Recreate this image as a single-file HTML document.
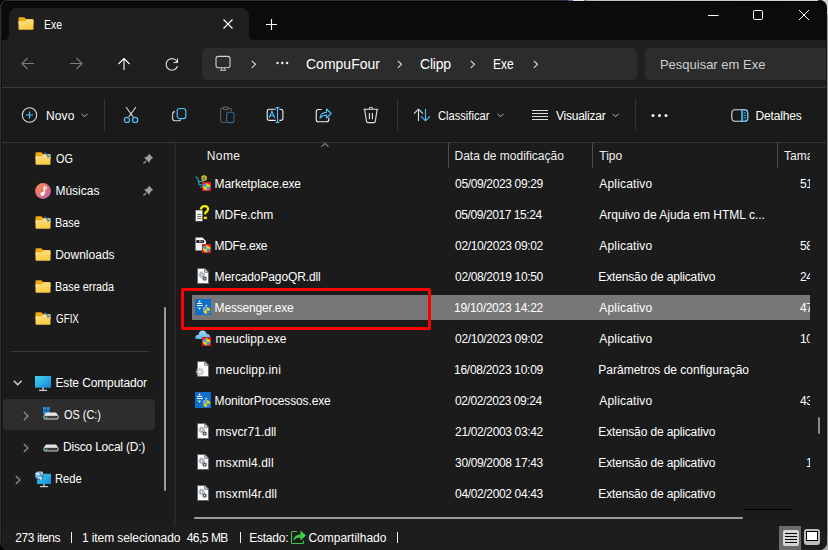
<!DOCTYPE html>
<html><head><meta charset="utf-8"><title>Exe</title><style>
*{margin:0;padding:0;box-sizing:border-box}
html,body{width:828px;height:550px;overflow:hidden;background:#000;font-family:"Liberation Sans", sans-serif}
#bgR{position:absolute;left:820px;top:0;width:8px;height:550px;background:#9a9ca4}
#bgTR{position:absolute;left:560px;top:0;width:268px;height:14px;background:#d4d4d4}
#bgBR{position:absolute;left:800px;top:535px;width:28px;height:15px;background:#a4a4a4}
#win{position:absolute;left:0;top:0;width:827px;height:550px;border-radius:8px;overflow:hidden;background:#0b0b0b;box-shadow:inset 0 1px 0 #333,inset 1px 0 0 #303030,inset 0 -1px 0 #2a2a2a}
#win::after{content:"";position:absolute;left:1px;top:1px;right:0;bottom:1px;border-radius:7px;border-top:1px solid #000;border-left:1px solid #111;pointer-events:none}
#toprow{position:absolute;left:568px;top:0;width:250px;height:1px;background:linear-gradient(90deg,#4a70b0 0,#4a70b0 5px,#e8e8e8 5px,#e8e8e8 16px,#7088b0 16px,#7088b0 19px,#c0c0c0 19px,#d4d4d4 100%);z-index:5}
#rdark{position:absolute;left:826px;top:12px;width:1px;height:526px;background:#131313;z-index:5}
.t{position:absolute;white-space:nowrap;line-height:normal}
.ic{position:absolute;overflow:visible}
#tab{position:absolute;left:9px;top:8px;width:240px;height:32px;background:#1f1f1f;border-radius:8px 8px 0 0}
#navrow{position:absolute;left:1px;top:40px;width:826px;height:47px;background:#1f1f1f;border-top:1px solid #1a1a1a}
#tabear{position:absolute;left:249px;top:36px;width:4px;height:4px;background:radial-gradient(circle at 100% 0,#0b0b0b 3.5px,#1f1f1f 4px)}
#tabear2{position:absolute;left:5px;top:36px;width:4px;height:4px;background:radial-gradient(circle at 0 0,#0b0b0b 3.5px,#1f1f1f 4px)}
#addr{position:absolute;left:202px;top:48px;width:435px;height:32px;background:#2c2c2c;border-radius:5px}
#search{position:absolute;left:645px;top:48px;width:190px;height:32px;background:#2c2c2c;border-radius:5px}
#cmd{position:absolute;left:1px;top:87px;width:826px;height:55px;background:#1a1a1a;border-top:1px solid #393939}
.vsep{position:absolute;top:99px;width:1px;height:32px;background:#333}
#hsep{position:absolute;left:1px;top:142px;width:826px;height:384px;background:#1b1b1b;border-top:1px solid #363636}
#paneDiv{position:absolute;left:174px;top:143px;width:2px;height:383px;background:#272727}
#navsep{position:absolute;left:11px;top:351px;width:138px;height:1px;background:#3a3a3a}
#oshl{position:absolute;left:3px;top:399px;width:152px;height:31px;background:#2d2d2d;border-radius:4px}
#navthumb{position:absolute;left:164px;top:307px;width:2px;height:184px;background:#9a9a9a;border-radius:1px}
.hdiv{position:absolute;top:143px;width:1px;height:25px;background:#4c4c4c}
#tamaclip{position:absolute;left:777px;top:0;width:33px;height:200px;overflow:hidden}
#sizeclip{position:absolute;left:800px;top:0;width:10px;height:526px;overflow:hidden}
#selrow{position:absolute;left:192px;top:295px;width:618px;height:25px;background:#777}
#redbox{position:absolute;left:181px;top:288px;width:250px;height:42px;border:3px solid #ff0000;border-radius:2px}
#hscroll{position:absolute;left:194px;top:517px;width:549px;height:2px;background:#9a9a9a;border-radius:1px}
#hblack{position:absolute;left:743px;top:509px;width:50px;height:1px;background:#000}
#vthumb{position:absolute;left:818px;top:417px;width:2px;height:17px;background:#8a8a8a;border-radius:1px}
#status{position:absolute;left:1px;top:526px;width:826px;height:24px;background:#1d1d1d}
.sbar{position:absolute;top:532px;width:1px;height:11px;background:#f0f0f0}
#vb1{position:absolute;left:779px;top:526px;width:22px;height:24px;background:#6b6b6b}
#vb1i{position:absolute;left:4px;top:4px;width:16px;height:16px;background:#d6d6d6;border-radius:2px;background-image:linear-gradient(#000,#000),linear-gradient(#000,#000),linear-gradient(#000,#000),linear-gradient(#000,#000);background-size:12px 1px;background-repeat:no-repeat;background-position:2px 3px,2px 6px,2px 9px,2px 12px}
#vb2{position:absolute;left:804px;top:529px;width:16px;height:16px;background:#bdbdbd;border-radius:3px}
#vb2i{position:absolute;left:2px;top:2px;width:12px;height:10px;background:#fff;border:1px solid #000}
</style></head>
<body><svg width="0" height="0" style="position:absolute"><defs>
<linearGradient id="fg" x1="0" y1="0" x2="0.35" y2="1"><stop offset="0" stop-color="#ffe69a"/><stop offset="1" stop-color="#fdc93f"/></linearGradient>
<linearGradient id="cg" x1="0" y1="0" x2="0" y2="1"><stop offset="0" stop-color="#a7dcf7"/><stop offset="1" stop-color="#5ab6ea"/></linearGradient>
<linearGradient id="mg" x1="0" y1="0" x2="1" y2="1"><stop offset="0" stop-color="#f8904e"/><stop offset="0.55" stop-color="#e27078"/><stop offset="1" stop-color="#a862d0"/></linearGradient>
<linearGradient id="pcg" x1="0" y1="0" x2="1" y2="1"><stop offset="0" stop-color="#3fd6ee"/><stop offset="1" stop-color="#1486d6"/></linearGradient><radialGradient id="glb" cx="0.4" cy="0.35" r="0.7"><stop offset="0" stop-color="#8cc8ec"/><stop offset="1" stop-color="#2f78b8"/></radialGradient>
</defs></svg><div id="bgR"></div><div id="bgTR"></div><div id="bgBR"></div><div id="win"><div id="tab"></div><div id="tabear"></div><div id="tabear2"></div><svg class="ic" style="left:18px;top:17px" width="16" height="13" viewBox="0 0 16 13"><path d="M0.5 1.3 Q0.5 0.3 1.5 0.3 H6.3 L8.3 2.2 H14.5 Q15.5 2.2 15.5 3.2 V7 H0.5 Z" fill="#eeab12"/>
<path d="M0.5 4.3 H7 L8.6 2.2 H14.5 Q15.5 2.2 15.5 3.2 V11.8 Q15.5 12.8 14.5 12.8 H1.5 Q0.5 12.8 0.5 11.8 Z" fill="url(#fg)"/></svg><div class="t" style="top:18px;font-size:12px;color:#fff;left:43.83px;transform:scaleX(0.8750);transform-origin:0 0;">Exe</div><svg class="ic" style="left:223px;top:19px" width="10" height="10" viewBox="0 0 10 10"><path d="M0.5 0.5 L9.5 9.5 M9.5 0.5 L0.5 9.5" stroke="#fff" stroke-width="1.1"/></svg><svg class="ic" style="left:266px;top:19px" width="11" height="11" viewBox="0 0 11 11"><path d="M5.5 0 V11 M0 5.5 H11" stroke="#fff" stroke-width="1.1"/></svg><svg class="ic" style="left:708px;top:14px" width="11" height="3" viewBox="0 0 11 3"><path d="M0 1.5 H10.5" stroke="#fff" stroke-width="1"/></svg><svg class="ic" style="left:752px;top:9px" width="12" height="12" viewBox="0 0 12 12"><rect x="1.5" y="1.5" width="9" height="9" rx="1.2" fill="none" stroke="#fff" stroke-width="1"/></svg><svg class="ic" style="left:798px;top:9px" width="12" height="12" viewBox="0 0 12 12"><path d="M1 1 L11 11 M11 1 L1 11" stroke="#fff" stroke-width="1"/></svg><div id="navrow"></div><svg class="ic" style="left:21px;top:57px" width="14" height="14" viewBox="0 0 14 14"><path d="M1 6.5 H13 M6.5 1 L1 6.5 L6.5 12" stroke="#7b7b7b" stroke-width="1.1" fill="none"/></svg><svg class="ic" style="left:69px;top:57px" width="14" height="14" viewBox="0 0 14 14"><path d="M1 6.5 H13 M7.5 1 L13 6.5 L7.5 12" stroke="#7b7b7b" stroke-width="1.1" fill="none"/></svg><svg class="ic" style="left:117px;top:57px" width="14" height="14" viewBox="0 0 14 14"><path d="M7 1.5 V13 M1.5 7 L7 1.5 L12.5 7" stroke="#fff" stroke-width="1.1" fill="none"/></svg><svg class="ic" style="left:165px;top:57px" width="15" height="15" viewBox="0 0 15 15"><path d="M12.2 5 A5.8 5.8 0 1 0 12.5 9" stroke="#ddd" stroke-width="1.1" fill="none"/><path d="M12.5 1.5 V5.5 H8.5" stroke="#ddd" stroke-width="1.1" fill="none"/></svg><div id="addr"></div><svg class="ic" style="left:215px;top:55px" width="16" height="17" viewBox="0 0 16 17"><rect x="1" y="1.4" width="14" height="11.3" rx="2.2" fill="none" stroke="#d0d0d0" stroke-width="1.1"/><path d="M6.6 12.8 V14.6 M9.4 12.8 V14.6" stroke="#d0d0d0" stroke-width="1"/><path d="M4.8 15.2 H11.2" stroke="#d0d0d0" stroke-width="1.1"/></svg><svg class="ic" style="left:251px;top:60px" width="6" height="9" viewBox="0 0 6 9"><path d="M0.8 0.8 L4.5 4.3 L0.8 7.8" stroke="#ddd" stroke-width="1.1" fill="none"/></svg><svg class="ic" style="left:276px;top:61px" width="13" height="4" viewBox="0 0 13 4"><circle cx="1.5" cy="2" r="1.2" fill="#eee"/><circle cx="6.3" cy="2" r="1.2" fill="#eee"/><circle cx="11.1" cy="2" r="1.2" fill="#eee"/></svg><div class="t" style="top:56px;font-size:14px;color:#fff;left:306.00px;">CompuFour</div><svg class="ic" style="left:397px;top:60px" width="6" height="9" viewBox="0 0 6 9"><path d="M0.8 0.8 L4.5 4.3 L0.8 7.8" stroke="#ddd" stroke-width="1.1" fill="none"/></svg><div class="t" style="top:56px;font-size:14px;color:#fff;left:420.10px;letter-spacing:-0.250px;">Clipp</div><svg class="ic" style="left:470px;top:60px" width="6" height="9" viewBox="0 0 6 9"><path d="M0.8 0.8 L4.5 4.3 L0.8 7.8" stroke="#ddd" stroke-width="1.1" fill="none"/></svg><div class="t" style="top:56px;font-size:14px;color:#fff;left:492.84px;transform:scaleX(0.8609);transform-origin:0 0;">Exe</div><svg class="ic" style="left:533px;top:60px" width="6" height="9" viewBox="0 0 6 9"><path d="M0.8 0.8 L4.5 4.3 L0.8 7.8" stroke="#ddd" stroke-width="1.1" fill="none"/></svg><div id="search"></div><div class="t" style="top:57px;font-size:13px;color:#cfcfcf;left:659.90px;">Pesquisar em Exe</div><div id="cmd"></div><svg class="ic" style="left:21px;top:107px" width="17" height="17" viewBox="0 0 17 17"><circle cx="8.5" cy="8" r="7.2" fill="none" stroke="#ddd" stroke-width="1.1"/><path d="M8.5 4.5 V11.5 M5 8 H12" stroke="#4cc2ff" stroke-width="1.2"/></svg><div class="t" style="top:109px;font-size:12px;color:#fff;left:45.90px;letter-spacing:0.167px;">Novo</div><svg class="ic" style="left:81px;top:113px" width="7" height="5" viewBox="0 0 7 5"><path d="M0.5 0.8 L3.5 3.8 L6.5 0.8" stroke="#bbb" stroke-width="1" fill="none"/></svg><div class="vsep" style="left:104px"></div><svg class="ic" style="left:123px;top:106px" width="16" height="18" viewBox="0 0 16 18"><path d="M3 1 L10.2 10.8 M13 1 L5.8 10.8" stroke="#d8d8d8" stroke-width="1.1"/><circle cx="3.9" cy="13.9" r="2.6" fill="none" stroke="#4cc2ff" stroke-width="1.2"/><circle cx="12.1" cy="13.9" r="2.6" fill="none" stroke="#4cc2ff" stroke-width="1.2"/></svg><svg class="ic" style="left:171px;top:107px" width="17" height="16" viewBox="0 0 17 16"><rect x="6.2" y="1.5" width="8.6" height="10.2" rx="2.6" fill="none" stroke="#4cc2ff" stroke-width="1.2"/><path d="M4 4.6 Q1.6 4.8 1.6 7 V11.6 Q1.6 13.8 4 13.8 H7.5 Q9.3 13.8 9.6 12.6" stroke="#d8d8d8" stroke-width="1.1" fill="none"/></svg><svg class="ic" style="left:219px;top:106px" width="17" height="18" viewBox="0 0 17 18"><path d="M6.8 16.5 H3.5 Q1.6 16.5 1.6 14.6 V4 Q1.6 2.3 3.3 2.3 H4.2 M9.3 2.3 H10.6 Q12.4 2.3 12.4 4 V5.2" stroke="#5e5e5e" stroke-width="1.1" fill="none"/><rect x="4.2" y="1.1" width="5.1" height="2.5" rx="1.25" fill="none" stroke="#5e5e5e" stroke-width="1.1"/><rect x="7.6" y="6.3" width="7.4" height="10.3" rx="2" fill="none" stroke="#2e6d96" stroke-width="1.1"/></svg><svg class="ic" style="left:266px;top:106px" width="18" height="18" viewBox="0 0 18 18"><path d="M9.6 3.2 H3.3 Q1.2 3.2 1.2 5.3 V12.3 Q1.2 14.4 3.3 14.4 H9.6 M13.4 3.2 H14.8 Q16.9 3.2 16.9 5.3 V12.3 Q16.9 14.4 14.8 14.4 H13.4" stroke="#f0f0f0" stroke-width="1.1" fill="none"/><path d="M11.5 1.6 V16.4 M9.6 1.6 H13.4 M9.6 16.4 H13.4" stroke="#4cc2ff" stroke-width="1.1" fill="none"/><path d="M3.1 12 L5.9 5.2 L8.7 12 M4.1 9.8 H7.7" stroke="#4cc2ff" stroke-width="1.1" fill="none"/></svg><svg class="ic" style="left:315px;top:107px" width="18" height="17" viewBox="0 0 18 17"><path d="M6.5 2.5 H3.5 Q1.2 2.5 1.2 4.8 V12.5 Q1.2 14.8 3.5 14.8 H11.5 Q13.8 14.8 13.8 12.5 V10.8" stroke="#f0f0f0" stroke-width="1.1" fill="none"/><path d="M5 11.2 Q5.3 5.5 11.5 5.3 V2 L16.2 6.5 L11.5 11 V8 Q7.5 8 5 11.2 Z" fill="none" stroke="#4cc2ff" stroke-width="1.1" stroke-linejoin="round"/></svg><svg class="ic" style="left:363px;top:106px" width="16" height="18" viewBox="0 0 16 18"><path d="M0.5 3.3 H15.3 M6.1 3.3 Q6.1 1.3 7.9 1.3 Q9.7 1.3 9.7 3.3 M1.7 3.6 L3.5 15.3 Q3.7 16.6 5 16.6 H10.8 Q12.1 16.6 12.3 15.3 L14.1 3.6 M6.4 7 V13.2 M9.4 7 V13.2" stroke="#e0e0e0" stroke-width="1.1" fill="none"/></svg><div class="vsep" style="left:397px"></div><svg class="ic" style="left:413px;top:107px" width="18" height="16" viewBox="0 0 18 16"><path d="M5.5 14 V2.2 M1 6.7 L5.5 2.2 L10 6.7" stroke="#e0e0e0" stroke-width="1.1" fill="none"/><path d="M12.5 2 V13.8 M8 9.3 L12.5 13.8 L17 9.3" stroke="#4cc2ff" stroke-width="1.1" fill="none"/></svg><div class="t" style="top:109px;font-size:12px;color:#fff;left:437.90px;transform:scaleX(0.9286);transform-origin:0 0;">Classificar</div><svg class="ic" style="left:497px;top:113px" width="7" height="5" viewBox="0 0 7 5"><path d="M0.5 0.8 L3.5 3.8 L6.5 0.8" stroke="#bbb" stroke-width="1" fill="none"/></svg><svg class="ic" style="left:531px;top:109px" width="18" height="14" viewBox="0 0 18 14"><path d="M1 1.5 H17 M1 4.5 H17 M1 7.5 H17 M1 10.5 H17" stroke="#ddd" stroke-width="1"/></svg><div class="t" style="top:109px;font-size:12px;color:#fff;left:555.90px;letter-spacing:-0.222px;">Visualizar</div><svg class="ic" style="left:612px;top:113px" width="7" height="5" viewBox="0 0 7 5"><path d="M0.5 0.8 L3.5 3.8 L6.5 0.8" stroke="#bbb" stroke-width="1" fill="none"/></svg><div class="vsep" style="left:635px"></div><svg class="ic" style="left:651px;top:113px" width="18" height="5" viewBox="0 0 18 5"><circle cx="2" cy="2.5" r="1.5" fill="#fff"/><circle cx="8.5" cy="2.5" r="1.5" fill="#fff"/><circle cx="15" cy="2.5" r="1.5" fill="#fff"/></svg><svg class="ic" style="left:731px;top:109px" width="18" height="13" viewBox="0 0 18 13"><rect x="0.8" y="0.8" width="16" height="11.5" rx="3" fill="none" stroke="#ddd" stroke-width="1.1"/><path d="M11 1 V12.5" stroke="#4cc2ff" stroke-width="1.1"/><path d="M11 1 H14 Q16.5 1 16.5 3.5 V9.5 Q16.5 12.2 14 12.2 H11 Z" fill="none" stroke="#4cc2ff" stroke-width="1.1"/><path d="M12.5 4 H15 M12.5 6.5 H15 M12.5 9 H15" stroke="#4cc2ff" stroke-width="0.9"/></svg><div class="t" style="top:109px;font-size:12px;color:#fff;left:755.40px;letter-spacing:-0.143px;">Detalhes</div><div id="hsep"></div><div id="paneDiv"></div><svg class="ic" style="left:35px;top:152px" width="16" height="13" viewBox="0 0 16 13"><path d="M0.5 1.3 Q0.5 0.3 1.5 0.3 H6.3 L8.3 2.2 H14.5 Q15.5 2.2 15.5 3.2 V7 H0.5 Z" fill="#eeab12"/>
<path d="M0.5 4.3 H7 L8.6 2.2 H14.5 Q15.5 2.2 15.5 3.2 V11.8 Q15.5 12.8 14.5 12.8 H1.5 Q0.5 12.8 0.5 11.8 Z" fill="url(#fg)"/><path d="M9.6 0.6 L13.6 4.6" stroke="#2a8ee0" stroke-width="1.3"/><path d="M14.6 2.6 V5.6 H11.6 Z" fill="#2a8ee0"/></svg><div class="t" style="top:152px;font-size:12px;color:#fff;left:56.40px;transform:scaleX(0.9056);transform-origin:0 0;">OG</div><svg class="ic" style="left:143px;top:153px" width="11" height="11" viewBox="0 0 11 11"><path d="M6 0.8 L10.2 5 L8.8 5.6 L6.5 8.5 L6.8 10.2 L0.8 4.2 L2.5 4.5 L5.4 2.2 Z" fill="#9a9ea4"/><path d="M3.2 7.8 L0.5 10.5" stroke="#9a9ea4" stroke-width="1.2"/></svg><svg class="ic" style="left:35px;top:183px" width="16" height="16" viewBox="0 0 16 16"><circle cx="8" cy="8" r="7.9" fill="url(#mg)"/><path d="M9.3 3.6 V10.8" stroke="#fff" stroke-width="1.5"/><path d="M9.3 3.4 Q11.3 4 11.5 6.4" stroke="#fff" stroke-width="1.4" fill="none"/><circle cx="7.4" cy="11" r="2" fill="#fff"/></svg><div class="t" style="top:184px;font-size:12px;color:#fff;left:55.40px;">Músicas</div><svg class="ic" style="left:143px;top:185px" width="11" height="11" viewBox="0 0 11 11"><path d="M6 0.8 L10.2 5 L8.8 5.6 L6.5 8.5 L6.8 10.2 L0.8 4.2 L2.5 4.5 L5.4 2.2 Z" fill="#9a9ea4"/><path d="M3.2 7.8 L0.5 10.5" stroke="#9a9ea4" stroke-width="1.2"/></svg><svg class="ic" style="left:35px;top:216px" width="16" height="13" viewBox="0 0 16 13"><path d="M0.5 1.3 Q0.5 0.3 1.5 0.3 H6.3 L8.3 2.2 H14.5 Q15.5 2.2 15.5 3.2 V7 H0.5 Z" fill="#eeab12"/>
<path d="M0.5 4.3 H7 L8.6 2.2 H14.5 Q15.5 2.2 15.5 3.2 V11.8 Q15.5 12.8 14.5 12.8 H1.5 Q0.5 12.8 0.5 11.8 Z" fill="url(#fg)"/><path d="M9.6 0.6 L13.6 4.6" stroke="#2a8ee0" stroke-width="1.3"/><path d="M14.6 2.6 V5.6 H11.6 Z" fill="#2a8ee0"/></svg><div class="t" style="top:216px;font-size:12px;color:#fff;left:55.49px;transform:scaleX(0.9077);transform-origin:0 0;">Base</div><svg class="ic" style="left:35px;top:248px" width="16" height="13" viewBox="0 0 16 13"><path d="M0.5 1.3 Q0.5 0.3 1.5 0.3 H6.3 L8.3 2.2 H14.5 Q15.5 2.2 15.5 3.2 V7 H0.5 Z" fill="#eeab12"/>
<path d="M0.5 4.3 H7 L8.6 2.2 H14.5 Q15.5 2.2 15.5 3.2 V11.8 Q15.5 12.8 14.5 12.8 H1.5 Q0.5 12.8 0.5 11.8 Z" fill="url(#fg)"/></svg><div class="t" style="top:248px;font-size:12px;color:#fff;left:55.20px;">Downloads</div><svg class="ic" style="left:35px;top:280px" width="16" height="13" viewBox="0 0 16 13"><path d="M0.5 1.3 Q0.5 0.3 1.5 0.3 H6.3 L8.3 2.2 H14.5 Q15.5 2.2 15.5 3.2 V7 H0.5 Z" fill="#eeab12"/>
<path d="M0.5 4.3 H7 L8.6 2.2 H14.5 Q15.5 2.2 15.5 3.2 V11.8 Q15.5 12.8 14.5 12.8 H1.5 Q0.5 12.8 0.5 11.8 Z" fill="url(#fg)"/></svg><div class="t" style="top:280px;font-size:12px;color:#fff;left:55.30px;transform:scaleX(0.9046);transform-origin:0 0;">Base errada</div><svg class="ic" style="left:35px;top:312px" width="16" height="13" viewBox="0 0 16 13"><path d="M0.5 1.3 Q0.5 0.3 1.5 0.3 H6.3 L8.3 2.2 H14.5 Q15.5 2.2 15.5 3.2 V7 H0.5 Z" fill="#eeab12"/>
<path d="M0.5 4.3 H7 L8.6 2.2 H14.5 Q15.5 2.2 15.5 3.2 V11.8 Q15.5 12.8 14.5 12.8 H1.5 Q0.5 12.8 0.5 11.8 Z" fill="url(#fg)"/><path d="M9.6 0.6 L13.6 4.6" stroke="#2a8ee0" stroke-width="1.3"/><path d="M14.6 2.6 V5.6 H11.6 Z" fill="#2a8ee0"/></svg><div class="t" style="top:312px;font-size:12px;color:#fff;left:56.20px;transform:scaleX(0.8179);transform-origin:0 0;">GFIX</div><div id="navsep"></div><div id="oshl"></div><svg class="ic" style="left:13px;top:380px" width="10" height="7" viewBox="0 0 10 7"><path d="M0.8 0.8 L4.7 4.8 L8.6 0.8" stroke="#cfcfcf" stroke-width="1.5" fill="none"/></svg><svg class="ic" style="left:35px;top:376px" width="16" height="15" viewBox="0 0 16 15"><rect x="0" y="0" width="16" height="11.7" fill="url(#pcg)"/><path d="M8 11.5 V14" stroke="#b8c0c8" stroke-width="1.6"/><path d="M4 14.4 H12" stroke="#c8ccd0" stroke-width="1.3"/></svg><div class="t" style="top:376px;font-size:12px;color:#fff;left:55.40px;letter-spacing:-0.121px;">Este Computador</div><svg class="ic" style="left:23px;top:411px" width="6" height="10" viewBox="0 0 6 10"><path d="M0.9 0.9 L4.9 5 L0.9 9.1" stroke="#858585" stroke-width="1.5" fill="none"/></svg><svg class="ic" style="left:43px;top:407px" width="7" height="7" viewBox="0 0 7 7"><rect x="0" y="0" width="3.1" height="3.1" fill="#1a8ee8"/><rect x="3.6" y="0" width="3.1" height="3.1" fill="#1a8ee8"/><rect x="0" y="3.6" width="3.1" height="3.1" fill="#1a8ee8"/><rect x="3.6" y="3.6" width="3.1" height="3.1" fill="#1a8ee8"/></svg><svg class="ic" style="left:43px;top:412px" width="16" height="8" viewBox="0 0 16 8"><path d="M3 0.6 H13 L15.3 3.6 H0.7 Z" fill="#e6e6e6"/><rect x="0.9" y="3.4" width="14.2" height="3.6" rx="0.9" fill="#3c3c3c" stroke="#d4d4d4" stroke-width="1"/><rect x="2.8" y="4.6" width="1.5" height="1.3" fill="#3ee040"/></svg><div class="t" style="top:408px;font-size:12px;color:#fff;left:64.20px;transform:scaleX(0.9100);transform-origin:0 0;">OS (C:)</div><svg class="ic" style="left:23px;top:443px" width="6" height="10" viewBox="0 0 6 10"><path d="M0.9 0.9 L4.9 5 L0.9 9.1" stroke="#858585" stroke-width="1.5" fill="none"/></svg><svg class="ic" style="left:43px;top:444px" width="16" height="8" viewBox="0 0 16 8"><path d="M3 0.6 H13 L15.3 3.6 H0.7 Z" fill="#e6e6e6"/><rect x="0.9" y="3.4" width="14.2" height="3.6" rx="0.9" fill="#3c3c3c" stroke="#d4d4d4" stroke-width="1"/><rect x="2.8" y="4.6" width="1.5" height="1.3" fill="#3ee040"/></svg><div class="t" style="top:440px;font-size:12px;color:#fff;left:63.00px;letter-spacing:-0.200px;">Disco Local (D:)</div><svg class="ic" style="left:15px;top:475px" width="6" height="10" viewBox="0 0 6 10"><path d="M0.9 0.9 L4.9 5 L0.9 9.1" stroke="#858585" stroke-width="1.5" fill="none"/></svg><svg class="ic" style="left:34px;top:470px" width="18" height="18" viewBox="0 0 18 18"><rect x="3.1" y="3.8" width="13.9" height="10.2" fill="url(#pcg)"/><path d="M10 14 V16.3" stroke="#b8c0c8" stroke-width="1.5"/><path d="M6 16.6 H14" stroke="#c8ccd0" stroke-width="1.2"/><circle cx="5.2" cy="5.5" r="4.6" fill="#0f0f0f" opacity="0.5"/><circle cx="5.2" cy="5.5" r="4.3" fill="url(#glb)"/><path d="M1.5 4 Q3 2.5 4.5 3.5 Q5 5 3.2 5.5 M4.2 8.3 Q5.5 6.8 7.5 8 L6 9.5 M7 1.6 Q8.3 2.5 9 4.2" stroke="#eaf6ff" stroke-width="1.1" fill="none"/></svg><div class="t" style="top:472px;font-size:12px;color:#fff;left:54.87px;transform:scaleX(0.9286);transform-origin:0 0;">Rede</div><div id="navthumb"></div><div class="t" style="top:149px;font-size:12px;color:#f0f0f0;left:206.70px;letter-spacing:0.433px;">Nome</div><svg class="ic" style="left:321px;top:142px" width="8" height="6" viewBox="0 0 8 6"><path d="M0.6 4.8 L4 1.4 L7.4 4.8" stroke="#c0c0c0" stroke-width="1" fill="none"/></svg><div class="hdiv" style="left:448px"></div><div class="hdiv" style="left:592px"></div><div class="hdiv" style="left:777px"></div><div class="t" style="top:149px;font-size:12px;color:#f0f0f0;left:454.50px;">Data de modificação</div><div class="t" style="top:149px;font-size:12px;color:#f0f0f0;left:599.30px;">Tipo</div><div id="tamaclip"><div class="t" style="left:7px;top:149px;font-size:12px;color:#f0f0f0">Tamanho</div></div><div id="selrow"></div><div id="redbox"></div><svg class="ic" style="left:195px;top:175px" width="16" height="16" viewBox="0 0 16 16"><path d="M0.8 1.8 L2.8 3.4 L4.2 9.6 H8.8 M3.8 6.4 H8.5 M5 12 H7.5" stroke="#1fa3b5" stroke-width="1.2" fill="none"/>
<circle cx="9.1" cy="3.1" r="2.8" fill="#ffd000"/><path d="M10.3 4.4 Q9.4 5 8.5 4.5 Q7.6 3.9 8 2.7 Q8.6 1.5 9.7 1.9 Q10.5 2.3 10.2 3.2 H8.2" stroke="#1f5fae" stroke-width="0.9" fill="none"/><g transform="translate(7,7)"><rect x="0" y="0" width="9" height="9" fill="#e41a22"/>
<path d="M4.5 0.9 L8.2 3.2 V4.8 Q8 7.3 4.5 8.5 Q1 7.3 0.8 4.8 V3.2 Z" fill="#ffd200"/>
<path d="M4.5 0.9 V4.7 H0.8 V3.2 Z" fill="#2a9df2"/><path d="M4.5 4.7 H8.2 V4.8 Q8 7.3 4.5 8.5 Z" fill="#2a9df2"/></g></svg><div class="t" style="top:177px;font-size:12px;color:#fff;left:214.60px;letter-spacing:-0.114px;">Marketplace.exe</div><div class="t" style="top:177px;font-size:12px;color:#fff;left:455.10px;letter-spacing:-0.353px;">05/09/2023 09:29</div><div class="t" style="top:177px;font-size:12px;color:#fff;left:599.30px;letter-spacing:0.167px;">Aplicativo</div><svg class="ic" style="left:195px;top:206px" width="16" height="16" viewBox="0 0 16 16"><g transform="translate(-3.2,-3)"><rect x="3.5" y="7.5" width="8" height="11" fill="#000" opacity="0.6"/>
<path d="M3.5 7 H11 V18.5 H3.5 Z" fill="#f6f6f6" stroke="#222" stroke-width="0.6"/>
<path d="M5.5 11.5 H9.5 M5.5 13.5 H9.5 M5.5 15.5 H9.5" stroke="#6e6e6e" stroke-width="1"/>
<path d="M9 6.5 Q9.5 3.2 13 3.2 Q16.5 3.2 16.2 6.3 Q16 8.3 13.6 9.5 V11.5" stroke="#111" stroke-width="3.6" fill="none"/>
<path d="M9 6.5 Q9.5 3.2 13 3.2 Q16.5 3.2 16.2 6.3 Q16 8.3 13.6 9.5 V11.5" stroke="#f5ea00" stroke-width="2.3" fill="none"/>
<rect x="11.5" y="13.2" width="4" height="3.4" fill="#f5ea00" stroke="#111" stroke-width="0.8"/></g></svg><div class="t" style="top:208px;font-size:12px;color:#fff;left:214.60px;">MDFe.chm</div><div class="t" style="top:208px;font-size:12px;color:#fff;left:455.10px;letter-spacing:-0.420px;">05/09/2017 15:24</div><div class="t" style="top:208px;font-size:12px;color:#fff;left:599.30px;">Arquivo de Ajuda em HTML c...</div><svg class="ic" style="left:195px;top:237px" width="16" height="16" viewBox="0 0 16 16"><path d="M0.5 0.5 H7.5 L11 4 V13.5 H0.5 Z" fill="#f2f2f2"/>
<path d="M1.3 3.2 H4 Q5 3.2 5 4.2 Q5 3.2 6 3.2 H8.5 L9.5 4.5 L8.7 5.8 H1.3 Z" fill="#050505"/>
<path d="M4.2 4.5 H5.6 M6.6 4.5 H7.6" stroke="#f2f2f2" stroke-width="0.9"/><g transform="translate(7,7)"><rect x="0" y="0" width="9" height="9" fill="#e41a22"/>
<path d="M4.5 0.9 L8.2 3.2 V4.8 Q8 7.3 4.5 8.5 Q1 7.3 0.8 4.8 V3.2 Z" fill="#ffd200"/>
<path d="M4.5 0.9 V4.7 H0.8 V3.2 Z" fill="#2a9df2"/><path d="M4.5 4.7 H8.2 V4.8 Q8 7.3 4.5 8.5 Z" fill="#2a9df2"/></g></svg><div class="t" style="top:239px;font-size:12px;color:#fff;left:214.60px;letter-spacing:-0.343px;">MDFe.exe</div><div class="t" style="top:239px;font-size:12px;color:#fff;left:455.10px;letter-spacing:-0.353px;">02/10/2023 09:02</div><div class="t" style="top:239px;font-size:12px;color:#fff;left:599.30px;letter-spacing:0.167px;">Aplicativo</div><svg class="ic" style="left:195px;top:268px" width="16" height="16" viewBox="0 0 16 16"><path d="M2.5 0.5 H9.8 L13.5 4.2 V15.5 H2.5 Z" fill="#fbfbfb" stroke="#6a6a6a" stroke-width="1"/>
<path d="M9.8 0.5 V4.2 H13.5 Z" fill="#fff" stroke="#6a6a6a" stroke-width="1" stroke-linejoin="round"/>
<circle cx="6.7" cy="6.8" r="2.7" fill="none" stroke="#a9b2bc" stroke-width="1.2" stroke-dasharray="1.3 0.8"/>
<circle cx="6.7" cy="6.8" r="1.6" fill="none" stroke="#9aa4ae" stroke-width="1.3"/>
<circle cx="9.6" cy="10.6" r="2.1" fill="none" stroke="#5a626a" stroke-width="1" stroke-dasharray="1 0.7"/>
<circle cx="9.6" cy="10.6" r="1.2" fill="none" stroke="#4e565e" stroke-width="1.1"/></svg><div class="t" style="top:270px;font-size:12px;color:#fff;left:214.60px;letter-spacing:-0.125px;">MercadoPagoQR.dll</div><div class="t" style="top:270px;font-size:12px;color:#fff;left:455.10px;letter-spacing:-0.353px;">02/08/2019 10:50</div><div class="t" style="top:270px;font-size:12px;color:#fff;left:598.30px;letter-spacing:-0.143px;">Extensão de aplicativo</div><svg class="ic" style="left:195px;top:299px" width="16" height="16" viewBox="0 0 16 16"><rect x="0" y="0" width="16" height="16" fill="#0f6fc6"/>
<circle cx="4.5" cy="2.5" r="0.9" fill="#fff"/><circle cx="4.5" cy="9.5" r="0.9" fill="#fff"/>
<path d="M2 4.5 H7 M2 6.5 H8" stroke="#fff" stroke-width="1"/><path d="M2 8.5 H6" stroke="#5aa0e0" stroke-width="1"/>
<path d="M8.5 9.5 L11.5 6.5" stroke="#8cc4f0" stroke-width="0.9"/><circle cx="11.5" cy="6.5" r="0.8" fill="#fff"/><circle cx="8.5" cy="9.5" r="0.7" fill="#cde"/>
<circle cx="11.7" cy="11.6" r="3.4" fill="#ffd400"/><path d="M11.7 8.2 A3.4 3.4 0 0 0 8.3 11.6 H11.7Z" fill="#38a4f2"/><path d="M11.7 15 A3.4 3.4 0 0 0 15.1 11.6 H11.7Z" fill="#2a86d8"/></svg><div class="t" style="top:301px;font-size:12px;color:#fff;left:214.60px;letter-spacing:-0.183px;">Messenger.exe</div><div class="t" style="top:301px;font-size:12px;color:#fff;left:454.10px;letter-spacing:-0.287px;">19/10/2023 14:22</div><div class="t" style="top:301px;font-size:12px;color:#fff;left:599.30px;letter-spacing:0.167px;">Aplicativo</div><svg class="ic" style="left:195px;top:330px" width="16" height="16" viewBox="0 0 16 16"><path d="M2 9 Q-0.2 8.8 0.5 6.3 Q1.2 4.5 3.5 4.8 Q4.2 0.3 7.8 0.4 Q11 0.5 11.4 3.8 Q14.6 3.6 15 6.3 Q15.2 9 12.5 9 Z" fill="url(#cg)"/><g transform="translate(7,7)"><rect x="0" y="0" width="9" height="9" fill="#e41a22"/>
<path d="M4.5 0.9 L8.2 3.2 V4.8 Q8 7.3 4.5 8.5 Q1 7.3 0.8 4.8 V3.2 Z" fill="#ffd200"/>
<path d="M4.5 0.9 V4.7 H0.8 V3.2 Z" fill="#2a9df2"/><path d="M4.5 4.7 H8.2 V4.8 Q8 7.3 4.5 8.5 Z" fill="#2a9df2"/></g></svg><div class="t" style="top:332px;font-size:12px;color:#fff;left:215.60px;">meuclipp.exe</div><div class="t" style="top:332px;font-size:12px;color:#fff;left:455.10px;letter-spacing:-0.353px;">02/10/2023 09:02</div><div class="t" style="top:332px;font-size:12px;color:#fff;left:599.30px;letter-spacing:0.167px;">Aplicativo</div><svg class="ic" style="left:195px;top:361px" width="16" height="16" viewBox="0 0 16 16"><path d="M2.5 0.5 H9.8 L13.5 4.2 V15.5 H2.5 Z" fill="#fbfbfb" stroke="#6a6a6a" stroke-width="1"/>
<path d="M9.8 0.5 V4.2 H13.5 Z" fill="#fff" stroke="#6a6a6a" stroke-width="1" stroke-linejoin="round"/>
<circle cx="4.8" cy="10.8" r="3.3" fill="none" stroke="#b4b4b4" stroke-width="1.4" stroke-dasharray="1.4 1"/>
<circle cx="4.8" cy="10.8" r="2" fill="none" stroke="#c4c4c4" stroke-width="1.4"/>
<circle cx="4.8" cy="10.8" r="0.9" fill="#fff"/></svg><div class="t" style="top:363px;font-size:12px;color:#fff;left:215.60px;letter-spacing:0.173px;">meuclipp.ini</div><div class="t" style="top:363px;font-size:12px;color:#fff;left:454.10px;letter-spacing:-0.287px;">16/08/2023 10:09</div><div class="t" style="top:363px;font-size:12px;color:#fff;left:598.30px;">Parâmetros de configuração</div><svg class="ic" style="left:195px;top:392px" width="16" height="16" viewBox="0 0 16 16"><rect x="0" y="0" width="16" height="16" fill="#0f6fc6"/>
<circle cx="4.5" cy="2.5" r="0.9" fill="#fff"/><circle cx="4.5" cy="9.5" r="0.9" fill="#fff"/>
<path d="M2 4.5 H7 M2 6.5 H8" stroke="#fff" stroke-width="1"/><path d="M2 8.5 H6" stroke="#5aa0e0" stroke-width="1"/>
<path d="M8.5 9.5 L11.5 6.5" stroke="#8cc4f0" stroke-width="0.9"/><circle cx="11.5" cy="6.5" r="0.8" fill="#fff"/><circle cx="8.5" cy="9.5" r="0.7" fill="#cde"/>
<circle cx="11.7" cy="11.6" r="3.4" fill="#ffd400"/><path d="M11.7 8.2 A3.4 3.4 0 0 0 8.3 11.6 H11.7Z" fill="#38a4f2"/><path d="M11.7 15 A3.4 3.4 0 0 0 15.1 11.6 H11.7Z" fill="#2a86d8"/></svg><div class="t" style="top:394px;font-size:12px;color:#fff;left:214.60px;letter-spacing:-0.137px;">MonitorProcessos.exe</div><div class="t" style="top:394px;font-size:12px;color:#fff;left:455.10px;letter-spacing:-0.420px;">02/02/2023 09:24</div><div class="t" style="top:394px;font-size:12px;color:#fff;left:599.30px;letter-spacing:0.167px;">Aplicativo</div><svg class="ic" style="left:195px;top:423px" width="16" height="16" viewBox="0 0 16 16"><path d="M2.5 0.5 H9.8 L13.5 4.2 V15.5 H2.5 Z" fill="#fbfbfb" stroke="#6a6a6a" stroke-width="1"/>
<path d="M9.8 0.5 V4.2 H13.5 Z" fill="#fff" stroke="#6a6a6a" stroke-width="1" stroke-linejoin="round"/>
<circle cx="6.7" cy="6.8" r="2.7" fill="none" stroke="#a9b2bc" stroke-width="1.2" stroke-dasharray="1.3 0.8"/>
<circle cx="6.7" cy="6.8" r="1.6" fill="none" stroke="#9aa4ae" stroke-width="1.3"/>
<circle cx="9.6" cy="10.6" r="2.1" fill="none" stroke="#5a626a" stroke-width="1" stroke-dasharray="1 0.7"/>
<circle cx="9.6" cy="10.6" r="1.2" fill="none" stroke="#4e565e" stroke-width="1.1"/></svg><div class="t" style="top:425px;font-size:12px;color:#fff;left:215.60px;">msvcr71.dll</div><div class="t" style="top:425px;font-size:12px;color:#fff;left:455.10px;letter-spacing:-0.353px;">21/02/2003 03:42</div><div class="t" style="top:425px;font-size:12px;color:#fff;left:598.30px;letter-spacing:-0.143px;">Extensão de aplicativo</div><svg class="ic" style="left:195px;top:454px" width="16" height="16" viewBox="0 0 16 16"><path d="M2.5 0.5 H9.8 L13.5 4.2 V15.5 H2.5 Z" fill="#fbfbfb" stroke="#6a6a6a" stroke-width="1"/>
<path d="M9.8 0.5 V4.2 H13.5 Z" fill="#fff" stroke="#6a6a6a" stroke-width="1" stroke-linejoin="round"/>
<circle cx="6.7" cy="6.8" r="2.7" fill="none" stroke="#a9b2bc" stroke-width="1.2" stroke-dasharray="1.3 0.8"/>
<circle cx="6.7" cy="6.8" r="1.6" fill="none" stroke="#9aa4ae" stroke-width="1.3"/>
<circle cx="9.6" cy="10.6" r="2.1" fill="none" stroke="#5a626a" stroke-width="1" stroke-dasharray="1 0.7"/>
<circle cx="9.6" cy="10.6" r="1.2" fill="none" stroke="#4e565e" stroke-width="1.1"/></svg><div class="t" style="top:456px;font-size:12px;color:#fff;left:215.60px;letter-spacing:0.144px;">msxml4.dll</div><div class="t" style="top:456px;font-size:12px;color:#fff;left:455.10px;letter-spacing:-0.353px;">30/09/2008 17:43</div><div class="t" style="top:456px;font-size:12px;color:#fff;left:598.30px;letter-spacing:-0.143px;">Extensão de aplicativo</div><svg class="ic" style="left:195px;top:485px" width="16" height="16" viewBox="0 0 16 16"><path d="M2.5 0.5 H9.8 L13.5 4.2 V15.5 H2.5 Z" fill="#fbfbfb" stroke="#6a6a6a" stroke-width="1"/>
<path d="M9.8 0.5 V4.2 H13.5 Z" fill="#fff" stroke="#6a6a6a" stroke-width="1" stroke-linejoin="round"/>
<circle cx="6.7" cy="6.8" r="2.7" fill="none" stroke="#a9b2bc" stroke-width="1.2" stroke-dasharray="1.3 0.8"/>
<circle cx="6.7" cy="6.8" r="1.6" fill="none" stroke="#9aa4ae" stroke-width="1.3"/>
<circle cx="9.6" cy="10.6" r="2.1" fill="none" stroke="#5a626a" stroke-width="1" stroke-dasharray="1 0.7"/>
<circle cx="9.6" cy="10.6" r="1.2" fill="none" stroke="#4e565e" stroke-width="1.1"/></svg><div class="t" style="top:487px;font-size:12px;color:#fff;left:215.60px;letter-spacing:0.140px;">msxml4r.dll</div><div class="t" style="top:487px;font-size:12px;color:#fff;left:455.10px;letter-spacing:-0.353px;">04/02/2002 04:43</div><div class="t" style="top:487px;font-size:12px;color:#fff;left:598.30px;letter-spacing:-0.143px;">Extensão de aplicativo</div><div id="sizeclip"><div class="t" style="left:0px;top:177px;font-size:12px;color:#fff;letter-spacing:-0.3px">51</div><div class="t" style="left:0px;top:239px;font-size:12px;color:#fff;letter-spacing:-0.3px">58</div><div class="t" style="left:0px;top:270px;font-size:12px;color:#fff;letter-spacing:-0.3px">24</div><div class="t" style="left:0px;top:301px;font-size:12px;color:#fff;letter-spacing:-0.3px">47</div><div class="t" style="left:0px;top:332px;font-size:12px;color:#fff;letter-spacing:-0.3px">10</div><div class="t" style="left:0px;top:394px;font-size:12px;color:#fff;letter-spacing:-0.3px">43</div><div class="t" style="left:6px;top:456px;font-size:12px;color:#fff;letter-spacing:-0.3px">1</div></div><div id="hscroll"></div><div id="hblack"></div><div id="vthumb"></div><div id="status"></div><div class="t" style="top:531px;font-size:12px;color:#fff;left:15.20px;letter-spacing:-0.412px;">273 itens</div><div class="sbar" style="left:71px"></div><div class="t" style="top:531px;font-size:12px;color:#fff;left:81.90px;letter-spacing:-0.088px;">1 item selecionado</div><div class="t" style="top:531px;font-size:12px;color:#fff;left:186.70px;letter-spacing:-0.500px;">46,5 MB</div><div class="sbar" style="left:240px"></div><div class="t" style="top:531px;font-size:12px;color:#fff;left:249.20px;letter-spacing:-0.233px;">Estado:</div><svg class="ic" style="left:290px;top:529px" width="17" height="16" viewBox="0 0 17 16"><path d="M7 2.5 H2.5 Q1.5 2.5 1.5 3.5 V13.5 Q1.5 14.5 2.5 14.5 H12.5 Q13.5 14.5 13.5 13.5 V11.5" stroke="#3cc84a" stroke-width="1.1" fill="none"/><path d="M3.3 11.8 Q4 5.8 10.5 5.4 V1.6 L16 6.6 L10.5 11.4 V8.4 Q6 8.2 3.3 11.8 Z" fill="#3ccf4a"/></svg><div class="t" style="top:531px;font-size:12px;color:#fff;left:308.40px;">Compartilhado</div><div class="sbar" style="left:397px"></div><div id="vb1"><div id="vb1i"></div></div><div id="vb2"><div id="vb2i"></div></div></div><div id="toprow"></div><div id="rdark"></div></body></html>
